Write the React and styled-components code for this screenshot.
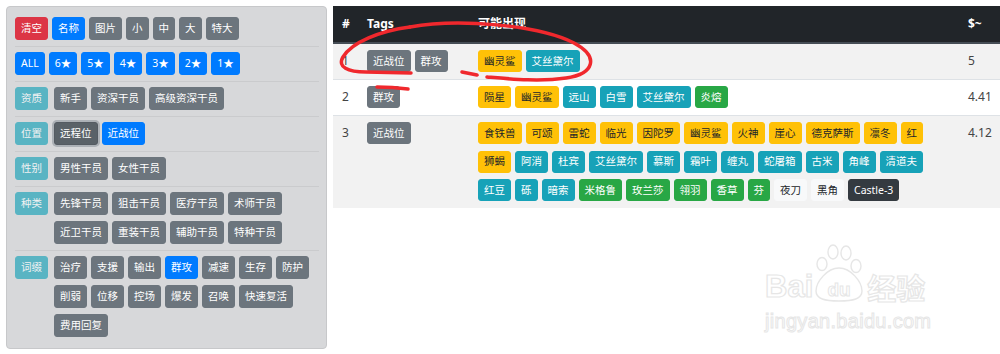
import React from 'react'
import styled, { createGlobalStyle, css } from 'styled-components'

const GlobalStyle = createGlobalStyle`
  body {
    margin: 0;
    background: #fff;
    font-family: "Noto Sans", "Noto Sans CJK SC", sans-serif;
  }
`

const palette = {
  primary: ['#007bff', '#fff'],
  secondary: ['#6c757d', '#fff'],
  danger: ['#dc3545', '#fff'],
  info: ['#17a2b8', '#fff'],
  warning: ['#ffc107', '#212529'],
  success: ['#28a745', '#fff'],
  light: ['#f8f9fa', '#212529'],
  dark: ['#343a40', '#fff'],
}

const Page = styled.div`
  position: relative;
  display: flex;
  align-items: flex-start;
  gap: 6px;
  padding: 6px 0 0 6px;
`

const Btn = styled.button`
  box-sizing: border-box;
  display: inline-flex;
  align-items: center;
  justify-content: center;
  height: ${p => p.$h || 23}px;
  padding: 0 5px;
  margin: 0;
  font: 10.5px/1 "Noto Sans", "Noto Sans CJK SC", sans-serif;
  white-space: nowrap;
  border-radius: 3px;
  border: 1px solid ${p => palette[p.$v][0]};
  background: ${p => palette[p.$v][0]};
  color: ${p => palette[p.$v][1]};
  ${p => p.$muted && css`opacity: 0.65;`}
  ${p => p.$focus && css`
    background: #5a6268;
    border-color: #545b62;
    box-shadow: 0 0 0 2px rgba(130, 138, 145, 0.5);
  `}
`

/* left filter panel */
const Panel = styled.div`
  box-sizing: border-box;
  width: 321px;
  flex: none;
  padding: 4px 7px 5px 8px;
  background: #d7d8da;
  border: 1px solid #c7c8ca;
  border-radius: 4px;
`

const FilterRow = styled.div`
  display: flex;
  align-items: flex-start;
  gap: 6px;
  padding: 6px 0 6px;
  & + & {
    border-top: 1px solid rgba(0, 0, 0, 0.06);
    padding-top: 5px;
  }
`

const Options = styled.div`
  display: flex;
  flex-wrap: wrap;
  gap: 6px 4px;
  flex: 1;
`

/* right result table */
const TableWrap = styled.div`
  flex: 1;
`

const Table = styled.table`
  width: 100%;
  border-collapse: collapse;
  table-layout: fixed;
  font-size: 12px;
  color: #444;
`

const Col = styled.col`
  width: ${p => p.$w}px;
`

const Th = styled.th`
  background: #212529;
  color: #fff;
  font-weight: bold;
  text-align: left;
  padding: 9px;
  line-height: 18px;
  border-bottom: 2px solid #454d55;
`

const Tr = styled.tr`
  background: ${p => (p.$striped ? '#f2f2f2' : '#fff')};
`

const Td = styled.td`
  padding: 6px 9px 7px;
  vertical-align: top;
  line-height: 22px;
  border-top: 1px solid #dee2e6;
`

const Tags = styled.div`
  display: flex;
  flex-wrap: wrap;
  gap: 6.5px 4px;
`

/* hand-drawn annotation + watermark on top of the page */
const Overlay = styled.svg`
  position: absolute;
  left: 0;
  top: 0;
  pointer-events: none;
`

const Watermark = styled.div`
  position: absolute;
  left: 765px;
  top: 244px;
  width: 185px;
  pointer-events: none;
`

const WmLogo = styled.div`
  display: flex;
  align-items: flex-end;
  font: bold 31px/1 "Liberation Sans", sans-serif;
  color: #fff;
  -webkit-text-stroke: 1.2px #e6e6e6;
`

const WmCn = styled.span`
  font: bold 29px/1 "Noto Sans CJK SC", sans-serif;
  margin-left: 2px;
`

const WmUrl = styled.div`
  margin-top: 9px;
  font: 20px/1 "Liberation Sans", sans-serif;
  color: #fff;
  -webkit-text-stroke: 1px #e6e6e6;
  letter-spacing: 0.3px;
`

const filters = [
  { items: [['清空', 'danger'], ['名称', 'primary'], ['图片'], ['小'], ['中'], ['大'], ['特大']] },
  { items: ['ALL', '6★', '5★', '4★', '3★', '2★', '1★'].map(t => [t, 'primary']) },
  { label: '资质', items: [['新手'], ['资深干员'], ['高级资深干员']] },
  { label: '位置', items: [['远程位', 'secondary', true], ['近战位', 'primary']] },
  { label: '性别', items: [['男性干员'], ['女性干员']] },
  {
    label: '种类',
    items: ['先锋干员', '狙击干员', '医疗干员', '术师干员', '近卫干员', '重装干员', '辅助干员', '特种干员'].map(t => [t]),
  },
  {
    label: '词缀',
    items: ['治疗', '支援', '输出', '群攻', '减速', '生存', '防护', '削弱', '位移', '控场', '爆发', '召唤', '快速复活', '费用回复'].map(t => [
      t,
      t === '群攻' ? 'primary' : 'secondary',
    ]),
  },
]

const rows = [
  { n: '1', tags: ['近战位', '群攻'], ops: [['幽灵鲨', 'warning'], ['艾丝黛尔', 'info']], cost: '5' },
  {
    n: '2',
    tags: ['群攻'],
    ops: [['陨星', 'warning'], ['幽灵鲨', 'warning'], ['远山', 'info'], ['白雪', 'info'], ['艾丝黛尔', 'info'], ['炎熔', 'success']],
    cost: '4.41',
  },
  {
    n: '3',
    tags: ['近战位'],
    ops: [
      ...['食铁兽', '可颂', '雷蛇', '临光', '因陀罗', '幽灵鲨', '火神', '崖心', '德克萨斯', '凛冬', '红', '狮蝎'].map(t => [t, 'warning']),
      ...['阿消', '杜宾', '艾丝黛尔', '慕斯', '霜叶', '缠丸', '蛇屠箱', '古米', '角峰', '清道夫', '红豆', '砾', '暗索'].map(t => [t, 'info']),
      ...['米格鲁', '玫兰莎', '翎羽', '香草', '芬'].map(t => [t, 'success']),
      ['夜刀', 'light'],
      ['黑角', 'light'],
      ['Castle-3', 'dark'],
    ],
    cost: '4.12',
  },
]

const App = () => (
  <>
    <GlobalStyle />
    <Page>
      <Panel>
        {filters.map((f, i) => (
          <FilterRow key={i}>
            {f.label && (
              <Btn $v="info" $muted>
                {f.label}
              </Btn>
            )}
            <Options>
              {f.items.map(([t, v, focus]) => (
                <Btn key={t} $v={v || 'secondary'} $focus={focus}>
                  {t}
                </Btn>
              ))}
            </Options>
          </FilterRow>
        ))}
      </Panel>

      <TableWrap>
        <Table>
          <colgroup>
            <Col $w={25} />
            <Col $w={111} />
            <Col $w={490} />
            <Col />
          </colgroup>
          <thead>
            <tr>
              <Th>#</Th>
              <Th>Tags</Th>
              <Th>可能出现</Th>
              <Th>$~</Th>
            </tr>
          </thead>
          <tbody>
            {rows.map((r, i) => (
              <Tr key={r.n} $striped={i % 2 === 0}>
                <Td>{r.n}</Td>
                <Td>
                  <Tags>
                    {r.tags.map(t => (
                      <Btn key={t} $v="secondary" $h={22}>
                        {t}
                      </Btn>
                    ))}
                  </Tags>
                </Td>
                <Td>
                  <Tags>
                    {r.ops.map(([t, v]) => (
                      <Btn key={t} $v={v} $h={22}>
                        {t}
                      </Btn>
                    ))}
                  </Tags>
                </Td>
                <Td>{r.cost}</Td>
              </Tr>
            ))}
          </tbody>
        </Table>
      </TableWrap>

      <Watermark>
        <WmLogo>
          Bai
          <svg width="52" height="58" viewBox="0 0 52 58">
            <g fill="#fff" stroke="#e6e6e6" strokeWidth="1.4">
              <ellipse cx="9" cy="20" rx="5" ry="6.5" />
              <ellipse cx="20" cy="8" rx="5" ry="7" />
              <ellipse cx="33" cy="9" rx="5" ry="7" />
              <ellipse cx="43" cy="22" rx="5" ry="6.5" />
              <path d="M26 24 C14 24 3 38 3 47 C3 55 12 57 26 57 C40 57 49 55 49 47 C49 38 38 24 26 24 Z" />
            </g>
            <text x="26" y="52" textAnchor="middle" fontFamily="Liberation Sans, sans-serif" fontWeight="bold" fontSize="19" fill="#fff" stroke="#e6e6e6" strokeWidth="1">
              du
            </text>
          </svg>
          <WmCn>经验</WmCn>
        </WmLogo>
        <WmUrl>jingyan.baidu.com</WmUrl>
      </Watermark>

      <Overlay width="1000" height="354" viewBox="0 0 1000 354">
        <g fill="none" stroke="#f0282d" strokeWidth="3.5" strokeLinecap="round" strokeLinejoin="round">
          <path d="M410 27 C380 31 352 42 343 57 C337 67 348 72 366 72 L411 73" />
          <path d="M410 27 C458 18 538 25 574 43 C600 57 594 74 566 78 C540 82 510 79 487 77" />
          <path d="M462 72 L477 75" />
          <path d="M377 87 C390 87 400 88 408 89" />
        </g>
      </Overlay>
    </Page>
  </>
)

export default App
